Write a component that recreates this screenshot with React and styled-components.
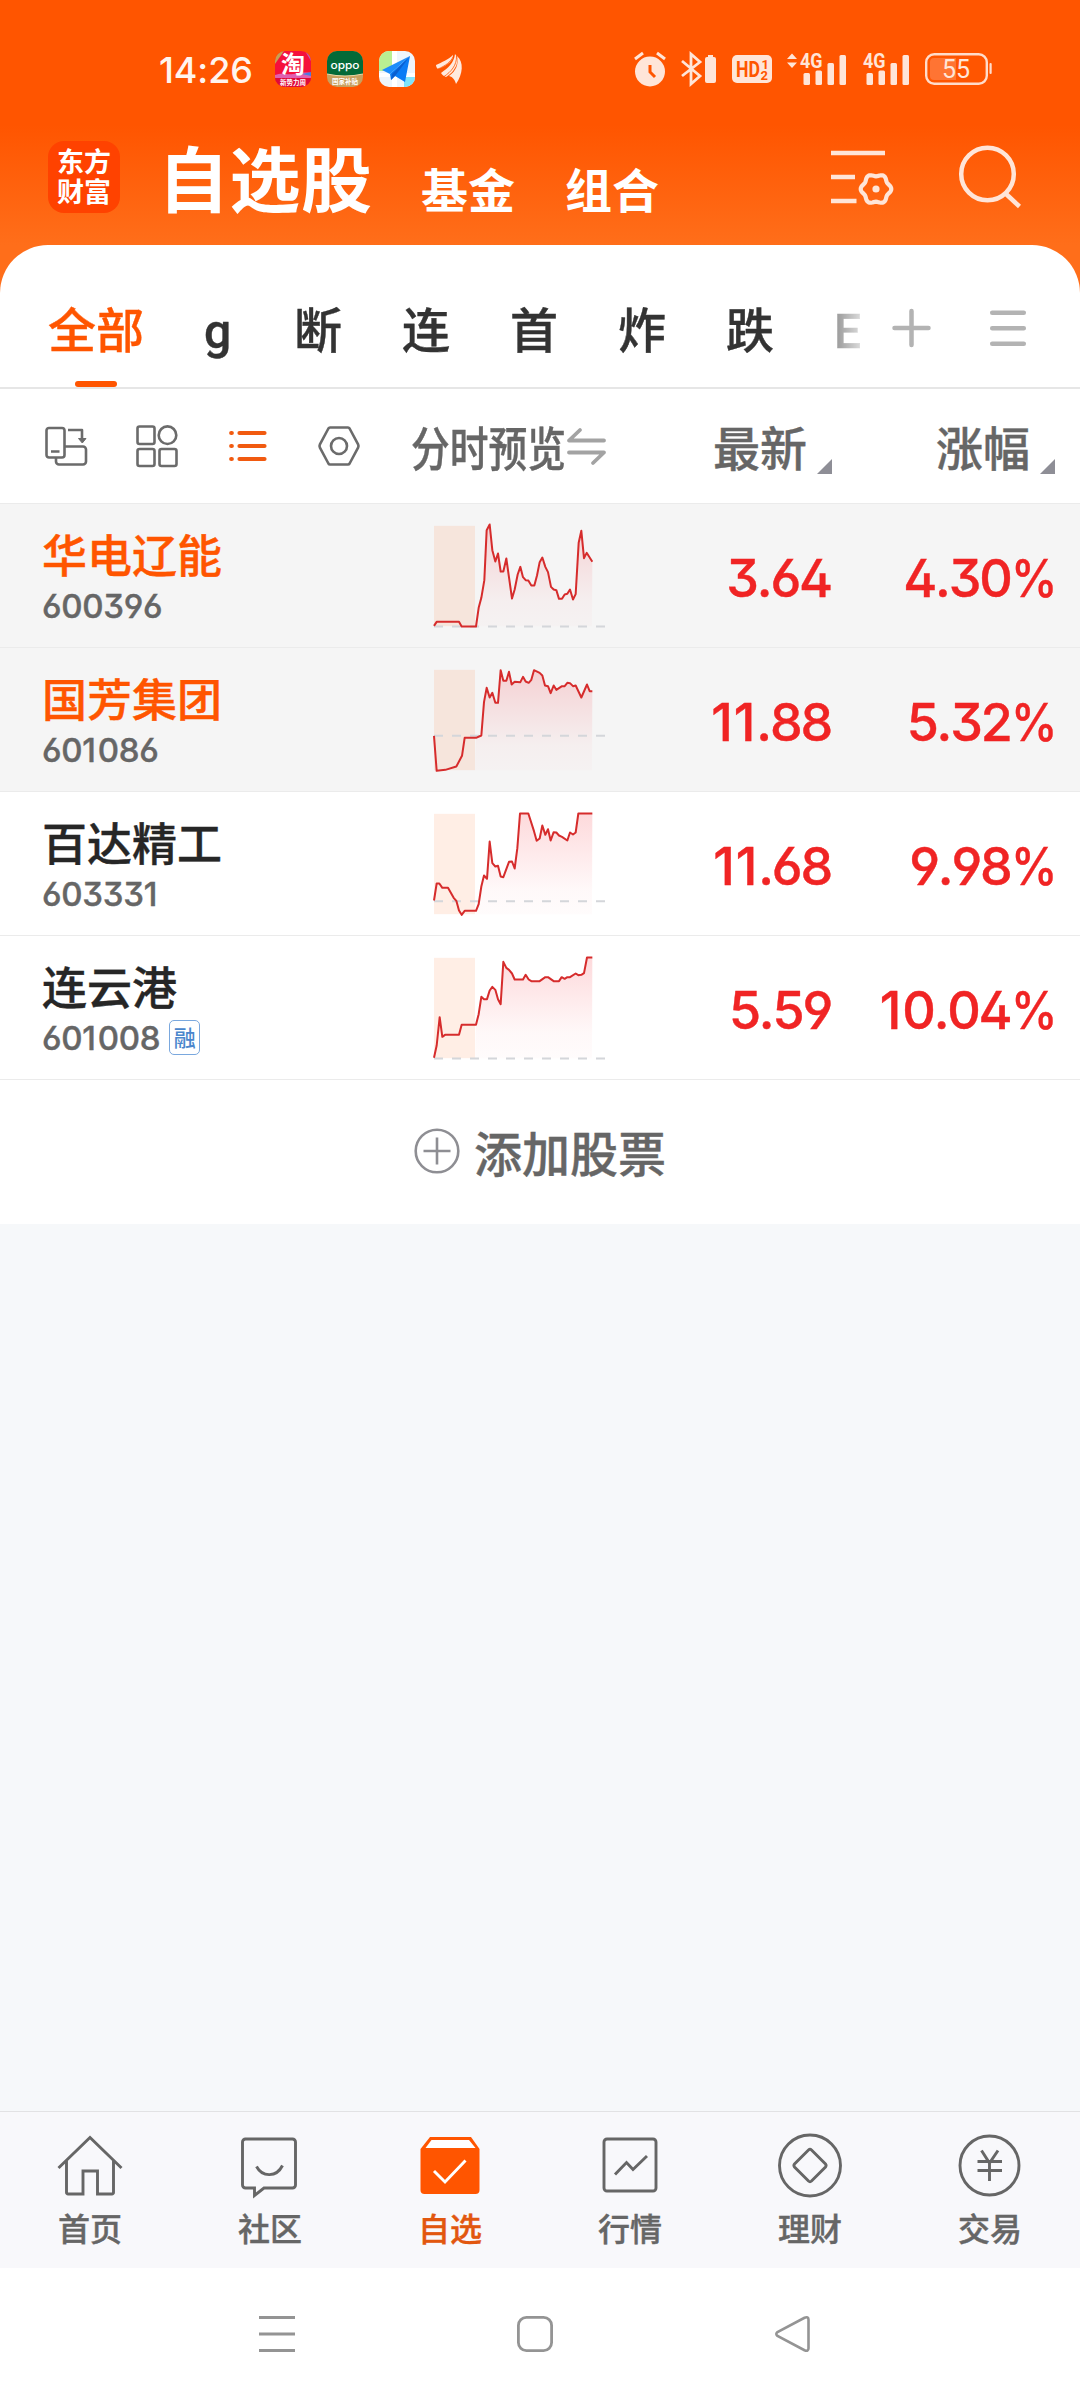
import React from "react";
import styled, { createGlobalStyle } from "styled-components";

const GlobalStyle = createGlobalStyle`
  * {
    box-sizing: border-box;
  }
  body {
    margin: 0;
    font-family: "Noto Sans CJK SC", sans-serif;
    font-weight: 500;
  }
  svg {
    display: block;
    flex: none;
    overflow: visible;
  }
`;

const Page = styled.div`
  width: 1080px;
  height: 2400px;
  display: flex;
  flex-direction: column;
  background: #f6f8fa;
  overflow: hidden;
  -webkit-text-stroke: 0.4px currentColor;
`;

const Hero = styled.div`
  background: linear-gradient(180deg, #ff5500 0px, #ff5500 125px, #ff6e1a 245px);
`;

const StatusBar = styled.div`
  height: 138px;
  padding: 0 88px 0 159px;
  display: flex;
  align-items: center;
  -webkit-text-stroke: 0;
`;

const Time = styled.div`
  width: 116px;
  font-family: Inter, sans-serif;
  font-size: 36px;
  font-weight: 500;
  letter-spacing: -0.1px;
  line-height: 44px;
  color: #fff4ee;
  padding-top: 2px;
`;

const AppIcons = styled.div`
  display: flex;
  align-items: center;
  gap: 16px;
`;

const SystemIcons = styled.div`
  margin-left: auto;
  display: flex;
  align-items: center;
  gap: 15px;
`;

const Header = styled.div`
  height: 107px;
  padding: 0 59px 0 48px;
  display: flex;
  align-items: flex-start;
  -webkit-text-stroke: 0;
`;

const Logo = styled.div`
  width: 72px;
  height: 72px;
  margin-top: 3px;
  padding-top: 5px;
  border-radius: 16px;
  background: #ff4200;
  color: #fff;
  font-size: 27px;
  font-weight: 700;
  line-height: 30px;
  text-align: center;
`;

const Title = styled.h1`
  width: 214px;
  margin: -3px 0 0 38px;
  font-size: 71px;
  font-weight: 700;
  line-height: 80px;
  letter-spacing: 0.5px;
  white-space: nowrap;
  color: #fff;
`;

const HeaderTab = styled.div`
  margin: 22px 0 0 ${({ $gap }) => $gap}px;
  font-size: 47px;
  font-weight: 700;
  line-height: 56px;
  color: #fff;
`;

const HeaderActions = styled.div`
  margin: 7px 0 0 auto;
  display: flex;
  align-items: center;
  gap: 66px;
`;

const TabsBar = styled.div`
  height: 144px;
  padding-left: 48px;
  display: flex;
  align-items: stretch;
  background: #fff;
  border-radius: 48px 48px 0 0;
  border-bottom: 2px solid #e6e6e6;
`;

const Tabs = styled.div`
  width: 812px;
  display: flex;
  gap: 60px;
  overflow: hidden;
  mask-image: linear-gradient(90deg, #000 0, #000 750px, transparent 826px);
`;

const Tab = styled.div`
  position: relative;
  flex: none;
  min-width: 30px;
  padding-top: 48px;
  font-size: 48px;
  line-height: 68px;
  color: ${({ $active }) => ($active ? "#ff5500" : "#333")};
`;

const TabLabel = styled.span`
  font-family: Roboto, "Noto Sans CJK SC", sans-serif;
  line-height: 1;
`;

const TabMark = styled.span`
  position: absolute;
  left: 27px;
  bottom: 0;
  width: 42px;
  height: 6px;
  border-radius: 3px;
  background: #ff5500;
`;

const TabActions = styled.div`
  padding: 63px 0 0 32px;
  display: flex;
  gap: 59px;
`;

const ColumnHead = styled.div`
  height: 114px;
  display: flex;
  align-items: center;
  background: #fff;
`;

const ViewModes = styled.div`
  width: 411px;
  padding-left: 45px;
  display: flex;
  align-items: center;
  gap: 49px;
`;

const HeadLabel = styled.div`
  display: flex;
  align-items: center;
  color: #666;
  font-size: 47px;
  line-height: 64px;
`;

const PreviewHead = styled(HeadLabel)`
  width: 271px;
`;

const Squeezed = styled.div`
  width: 156px;
  white-space: nowrap;
  transform: scaleX(0.825);
  transform-origin: left center;
`;

const SortHead = styled(HeadLabel)`
  width: ${({ $width }) => $width}px;
  justify-content: flex-end;
  gap: 10px;
`;

const SortMark = styled.span`
  width: 15px;
  height: 15px;
  margin-top: 41px;
  background: #8e8e96;
  clip-path: polygon(100% 0, 100% 100%, 0 100%);
`;

const StockRow = styled.div`
  height: 144px;
  display: flex;
  align-items: center;
  border-top: 1px solid #ebebeb;
  background: ${({ $viewed }) => ($viewed ? "#f5f5f5" : "#fff")};
`;

const StockInfo = styled.div`
  width: 430px;
  padding-left: 42px;
`;

const StockName = styled.div`
  font-size: 45px;
  line-height: 56px;
  color: ${({ $viewed }) => ($viewed ? "#ff5500" : "#262626")};
`;

const CodeLine = styled.div`
  height: 40px;
  margin-top: 4px;
  display: flex;
  align-items: center;
  gap: 9px;
`;

const digits = `
  font-family: Inter, sans-serif;
  font-feature-settings: "ss01", "cv09";
  font-kerning: none;
`;

const StockCode = styled.span`
  ${digits}
  font-size: 33px;
  line-height: 40px;
  letter-spacing: -0.3px;
  color: #666;
`;

// the narrow 1 gets some room on its right
const One = styled.span`
  margin-right: 0.06em;
`;

const MarginBadge = styled.span`
  width: 31px;
  height: 35px;
  border: 1.5px solid #7aa8de;
  border-radius: 5px;
  color: #4a86cc;
  font-size: 22px;
  line-height: 31px;
  text-align: center;
  -webkit-text-stroke: 0;
`;

const Figure = styled.div`
  ${digits}
  width: ${({ $width }) => $width}px;
  padding-top: 6px;
  font-size: 52px;
  line-height: 60px;
  letter-spacing: -2.2px;
  text-align: right;
  color: #f02424;
`;

const Percent = styled.span`
  display: inline-block;
  margin-left: -5px;
  transform: scaleX(0.9);
  transform-origin: right center;
`;

const AddRow = styled.div`
  height: 145px;
  padding-bottom: 3px;
  display: flex;
  align-items: center;
  justify-content: center;
  gap: 14px;
  border-top: 1px solid #ebebeb;
  background: #fff;
  color: #666;
  font-size: 48px;
  line-height: 64px;
`;

const Filler = styled.div`
  flex: 1;
`;

const BottomNav = styled.div`
  height: 157px;
  display: grid;
  grid-template-columns: repeat(6, 1fr);
  background: #f8f8fb;
  border-top: 1px solid #e2e2e4;
`;

const NavItem = styled.div`
  padding-top: 20px;
  display: flex;
  flex-direction: column;
  align-items: center;
  font-size: 32px;
  line-height: 40px;
  color: ${({ $active }) => ($active ? "#e2570f" : "#666")};
`;

const NavLabel = styled.span`
  margin-top: 11px;
`;

const SystemNav = styled.div`
  height: 132px;
  padding: 0 270px 0 259px;
  display: flex;
  align-items: center;
  justify-content: space-between;
  background: #fff;
`;

const TaobaoIcon = () => (
  <svg width="36" height="36" viewBox="0 0 36 36">
    <defs>
      <clipPath id="tb"><rect width="36" height="36" rx="10" /></clipPath>
    </defs>
    <g clipPath="url(#tb)">
      <rect width="36" height="36" fill="#f5103c" />
      <path d="M0 0h9L0 13z" fill="#c8a050" />
      <path d="M0 24c8-3 10 0 18-1s12-2 18-1v5H0z" fill="#e060b0" />
      <path d="M27 23l9-2v4z" fill="#4a7de0" />
      <path d="M30 0h6v10z" fill="#c060b0" />
      <rect y="27" width="36" height="9" fill="#e00a38" />
      <text x="18" y="22" fontSize="24" fontWeight="700" fill="#fff" textAnchor="middle">淘</text>
      <text x="18" y="34" fontSize="6.5" fontWeight="700" fill="#fff" textAnchor="middle">新势力周</text>
    </g>
  </svg>
);

const OppoIcon = () => (
  <svg width="36" height="36" viewBox="0 0 36 36">
    <defs>
      <clipPath id="op"><rect width="36" height="36" rx="10" /></clipPath>
    </defs>
    <g clipPath="url(#op)">
      <rect width="36" height="36" fill="#c9a05e" />
      <path d="M0 0h36v23q-18 4-36 0z" fill="#046a38" />
      <path d="M0 23q18 4 36 0" stroke="#ecd9a8" fill="none" />
      <text x="18" y="18" fontSize="11" fontFamily="Inter, sans-serif" textLength="29" lengthAdjust="spacingAndGlyphs" fill="#fff" textAnchor="middle">oppo</text>
      <text x="18" y="32.5" fontSize="6.5" fontWeight="700" fill="#fff" textAnchor="middle">国家补贴</text>
    </g>
  </svg>
);

const MapIcon = () => (
  <svg width="36" height="36" viewBox="0 0 36 36">
    <defs>
      <clipPath id="mp"><rect width="36" height="36" rx="10" /></clipPath>
    </defs>
    <g clipPath="url(#mp)">
      <rect width="36" height="36" fill="#eef5fb" />
      <path d="M0 0h13v20H0z" fill="#b9ef92" />
      <path d="M13 0h5v36h-5zM0 22h36v4H0z" fill="#fff" />
      <path d="M25 26h11v10H25z" fill="#7fe3fb" />
      <path d="M31 5L3 19l8 4z" fill="#1c8dfb" />
      <path d="M31 5L11 23l1 6 4-4 10 6z" fill="#0a7cf5" />
      <path d="M31 5L13 23l-1 6 4-4z" fill="#0a5fd0" />
    </g>
  </svg>
);

const WingSvg = styled.svg`
  margin-left: 5px;
`;

const WingIcon = () => (
  <WingSvg width="26" height="30" viewBox="0 0 26 30" fill="#ffe9de">
    <path d="M0 11C6 8 12 6 17 1c1 5-6 11-15 14C1 14 0 13 0 11z" />
    <path d="M5 19C12 14 18 9 19 0c6 6 0 18-9 23-2-1-4-2-5-4z" />
    <path d="M13 22c7-5 10-12 8-20 7 6 6 18-1 28-1-4-3-7-7-8z" />
    <path d="M17.500 2C15 8 9 12 2 15M20.500 2C21 11 15 18 8 22.500" stroke="#ff5500" strokeWidth="0.800" fill="none" />
  </WingSvg>
);

const AlarmIcon = () => (
  <svg width="32" height="36" viewBox="0 0 32 36">
    <circle cx="16" cy="20.5" r="15" fill="#ffe5d8" />
    <path d="M1 8l8-6M31 8l-8-6" stroke="#ffe5d8" strokeWidth="3" />
    <path d="M16 14v7l5 5" stroke="#ff5500" strokeWidth="3" fill="none" />
  </svg>
);

const BluetoothIcon = () => (
  <svg width="36" height="34" viewBox="0 0 36 34">
    <path d="M1 9l18 15-9 8V2l9 8L1 24" stroke="#ffe5d8" strokeWidth="2.8" fill="none" />
    <rect x="24" y="5" width="11" height="26" rx="2" fill="#ffe5d8" />
    <rect x="27" y="3" width="5" height="3" fill="#ffe5d8" />
  </svg>
);

const HdIcon = () => (
  <svg width="40" height="28" viewBox="0 0 40 28" fontFamily="Roboto, sans-serif" fontWeight="700" fill="#ff5500">
    <rect width="40" height="28" rx="5" fill="#ffe5d8" />
    <text x="4" y="22" fontSize="22" textLength="24" lengthAdjust="spacingAndGlyphs">HD</text>
    <text x="29.5" y="13.5" fontSize="13">1</text>
    <text x="28.5" y="25" fontSize="13">2</text>
  </svg>
);

const SignalIcon = ({ arrows }) => {
  const x = arrows ? 13 : 1;
  return (
    <svg width={arrows ? 60 : 48} height="32" viewBox={`0 0 ${arrows ? 60 : 48} 32`} fill="#ffe5d8">
      {arrows && <path d="M0 6l5-5.500 5 5.500zM0 9.500h10l-5 5.500z" />}
      <text x={x} y="15" fontSize="21" fontFamily="Roboto, sans-serif" fontWeight="700" textLength="22.500" lengthAdjust="spacingAndGlyphs">4G</text>
      <rect x={x + 3.5} y="20" width="6.500" height="12" rx="1.500" />
      <rect x={x + 15.5} y="17.500" width="6.500" height="14.500" rx="1.500" />
      <rect x={x + 27.500} y="10" width="6.500" height="22" rx="1.500" />
      <rect x={x + 39.500} y="2" width="6.500" height="30" rx="1.500" />
    </svg>
  );
};

const BatteryIcon = () => (
  <svg width="67" height="32" viewBox="0 0 67 32">
    <path d="M9 5h22v22H9a4 4 0 0 1-4-4V9a4 4 0 0 1 4-4z" fill="#ff7433" />
    <rect x="1.200" y="1.200" width="60.600" height="29.600" rx="8" fill="none" stroke="#ffdccb" strokeWidth="2.400" />
    <rect x="64.500" y="10" width="2.200" height="11" rx="1" fill="#ffdccb" />
    <text x="31" y="25" fontSize="25" fontFamily="Roboto, sans-serif" fontWeight="400" fill="#ffe5d8" textAnchor="middle">55</text>
  </svg>
);

const gear = () => {
  let d = "";
  for (let i = 0; i <= 72; i++) {
    const a = (i / 72) * Math.PI * 2;
    const r = 14 + 1.300 * Math.cos(6 * a);
    d += `${i ? "L" : "M"}${(45 + r * Math.cos(a)).toFixed(2)} ${(39 + r * Math.sin(a)).toFixed(2)}`;
  }
  return d + "z";
};

const ListSettingsIcon = () => (
  <svg width="62" height="54" viewBox="0 0 62 54" stroke="#ffe5d8" strokeWidth="4.500" fill="none">
    <path d="M0 3h54M0 27h24M0 51h25.500" />
    <path d={gear()} strokeWidth="4.200" strokeLinejoin="round" />
    <circle cx="45" cy="39" r="3.600" fill="#ffe5d8" stroke="none" />
  </svg>
);

const SearchIcon = () => (
  <svg width="62" height="64" viewBox="0 0 62 64" stroke="#ffe5d8" strokeWidth="4.500" fill="none">
    <circle cx="28.500" cy="29" r="26.300" />
    <path d="M46 48l14.500 13.500" />
  </svg>
);

const PlusIcon = () => (
  <svg width="39" height="39" viewBox="0 0 39 39" stroke="#b3b3b3" strokeWidth="4.500" strokeLinecap="round">
    <path d="M19.500 3v34M2.500 20h34" />
  </svg>
);

const MenuIcon = () => (
  <svg width="36" height="39" viewBox="0 0 36 39" stroke="#b3b3b3" strokeWidth="4.500" strokeLinecap="round">
    <path d="M2.200 4.700h31.600M2.200 20.300h31.600M2.200 35.700h31.600" />
  </svg>
);

const RotateIcon = () => (
  <svg width="42" height="42" viewBox="0 0 42 42" stroke="#6b6b6b" strokeWidth="2.600" fill="none" strokeLinejoin="round">
    <rect x="1.500" y="3" width="18" height="29.500" rx="2.500" />
    <path d="M6 26.500h8.500M19.500 21.500h18.500a3 3 0 0 1 3 3v12a3 3 0 0 1-3 3h-24a3 3 0 0 1-3-3v-4M23 5h14v10" />
    <path d="M33.500 13.500h7.500l-3.700 4.500z" fill="#6b6b6b" strokeWidth="1" />
  </svg>
);

const GridIcon = () => (
  <svg width="42" height="42" viewBox="0 0 42 42" stroke="#6b6b6b" strokeWidth="2.600" fill="none">
    <rect x="1.500" y="1.500" width="17" height="17.500" rx="2" />
    <circle cx="31.500" cy="10.200" r="8.800" />
    <rect x="1.500" y="24" width="17" height="17" rx="2" />
    <rect x="23.500" y="24" width="17" height="17" rx="2" />
  </svg>
);

const ListIcon = () => (
  <svg width="42" height="42" viewBox="0 0 42 42" stroke="#f15a10" strokeWidth="4.200" strokeLinecap="round">
    <path d="M12.500 8h25M12.500 21h25M12.500 34h25M4.200 8h.6M4.200 21h.6M4.200 34h.6" />
  </svg>
);

const HexIcon = () => (
  <svg width="42" height="42" viewBox="0 0 42 42" stroke="#6b6b6b" strokeWidth="2.600" fill="none" strokeLinejoin="round">
    <path d="M12 2.500h18q1 0 1.600 1l8.500 15.800q.8 1.700 0 3.400L31.600 38.500q-.6 1-1.600 1H12q-1 0-1.600-1L1.900 22.700q-.8-1.700 0-3.400L10.400 3.500q.6-1 1.600-1z" />
    <circle cx="21" cy="21" r="8" />
  </svg>
);

const SwapIcon = () => (
  <svg width="40" height="38" viewBox="0 0 40 38" stroke="#a3a3a3" strokeWidth="3.800" fill="none" strokeLinecap="round" strokeLinejoin="round">
    <path d="M37 13.500H2L13 3M2 25.500h35L26 36" />
  </svg>
);

const CirclePlusIcon = () => (
  <svg width="46" height="46" viewBox="0 0 46 46" stroke="#8e8e93" strokeWidth="2.600" fill="none">
    <circle cx="23" cy="23" r="21.300" />
    <path d="M23 9.500v27M9.500 23h27" />
  </svg>
);

// 64x64 drawings of the bottom tab bar
const navIcons = {
  home: (
    <>
      <path d="M.5 36L32 5.500 63.500 36" />
      <path d="M8.500 29v31.500a1.500 1.500 0 0 0 1.500 1.500H25V39h14.500v23H54a1.500 1.500 0 0 0 1.500-1.500V29" />
    </>
  ),
  chat: (
    <>
      <path d="M6.500 7h48a3 3 0 0 1 3 3v43a3 3 0 0 1-3 3H26l-9.500 7.500V56h-9a3 3 0 0 1-3-3V10a3 3 0 0 1 3-3z" />
      <path d="M18.500 34.500c6 11 20 11 26-1" />
    </>
  ),
  picks: (
    <>
      <path d="M2.500 17L12 5h41l8.500 12v41a4 4 0 0 1-4 4h-51a4 4 0 0 1-4-4z" fill="#ff5500" stroke="none" />
      <path d="M7.500 16l6-8h37.500l6.500 8z" fill="#fff" stroke="none" />
      <path d="M16 39l11 11 20.500-21.500" stroke="#fff" />
    </>
  ),
  market: (
    <>
      <rect x="6" y="7" width="52" height="52" rx="3" />
      <path d="M17 42.500L28.500 30.500 35 37.500 49 24" />
    </>
  ),
  finance: (
    <>
      <circle cx="32" cy="33.500" r="30.500" />
      <path d="M33.500 18l14 14q1.200 1.500 0 3l-14 14q-1.500 1.400-3 0l-14-14q-1.200-1.500 0-3l14-14q1.500-1.400 3 0z" />
    </>
  ),
  trade: (
    <>
      <circle cx="31.500" cy="33.500" r="29.500" />
      <path d="M23.500 18.500L31.500 31l8.500-12.500M19.500 29.500h24.500M19.500 38.500h24.500M31.500 30v19" />
    </>
  ),
};

const NavIcon = ({ name }) => (
  <svg width="64" height="64" viewBox="0 0 64 64" stroke="#666" strokeWidth="2.900" fill="none">
    {navIcons[name]}
  </svg>
);

// 3 units per pixel, the row is 432 units high
const Sparkline = ({ id, top, base, line }) => (
  <svg width="180" height="144" viewBox="30 1.500 540 432">
    <defs>
      <linearGradient id={id} x1="0" y1="0" x2="0" y2="1">
        <stop offset="0" stopColor="#f5222d" stopOpacity="0.17" />
        <stop offset="0.75" stopColor="#f5222d" stopOpacity="0.03" />
        <stop offset="1" stopColor="#f5222d" stopOpacity="0.015" />
      </linearGradient>
    </defs>
    <rect x="42" y={top} width="123" height="301" fill="#ff5500" fillOpacity="0.1" />
    <polygon points={`165,${top + 301} ${line.slice(line.indexOf("168,"))} 516,${top + 301}`} fill={`url(#${id})`} />
    <path d={`M42 ${base}H556`} stroke="#d4d6da" strokeWidth="6" strokeDasharray="27 27" />
    <polyline points={line} fill="none" stroke="#d62c2c" strokeWidth="6" strokeLinejoin="round" />
  </svg>
);

const Digits = ({ value }) =>
  value.split("").map((c, i) => (c === "1" ? <One key={i}>1</One> : c));

const stocks = [
  {
    name: "华电辽能", code: "600396", price: "3.64", change: "4.30", viewed: true, top: 67, base: 369,
    line: "42,367 50,355 117,355 125,369 168,369 176,313 184,283 193,230 200,80 209,63 217,140 226,174 234,150 242,204 250,204 259,165 276,285 284,258 293,213 301,190 309,221 317,230 325,231 334,246 343,246 351,216 359,176 367,162 376,190 384,206 393,250 401,258 409,260 417,286 426,286 434,273 442,271 450,258 459,288 467,272 476,118 484,82 492,164 500,148 517,175",
  },
  {
    name: "国芳集团", code: "601086", price: "11.88", change: "5.32", viewed: true, top: 67, base: 265,
    line: "42,265 50,370 76,367 109,357 126,325 134,271 168,271 184,264 192,164 200,121 209,150 217,136 226,166 234,166 242,68 250,100 259,100 267,73 275,111 284,103 301,104 309,88 317,102 326,106 334,97 342,68 359,76 367,84 375,114 384,116 392,137 401,114 409,127 426,116 434,116 442,106 450,107 459,116 467,114 484,150 501,111 509,131 517,131",
  },
  {
    name: "百达精工", code: "603331", price: "11.68", change: "9.98", top: 67, base: 329,
    line: "42,327 50,276 58,276 67,289 84,289 101,319 109,328 117,357 125,370 134,358 168,358 176,338 184,285 192,252 201,262 209,150 217,215 226,225 234,223 242,255 250,257 267,211 276,210 284,231 292,170 300,66 325,66 342,119 350,148 359,141 367,102 376,130 384,113 392,147 401,122 409,123 417,132 426,136 442,147 450,123 459,129 467,123 475,66 517,66",
  },
  {
    name: "连云港", code: "601008", price: "5.59", change: "10.04", margin: true, top: 67, base: 369,
    line: "42,367 50,330 59,245 67,304 75,298 117,298 125,268 168,268 176,236 184,184 192,191 201,191 209,165 217,154 226,163 234,191 242,206 250,79 259,97 267,103 276,114 284,132 309,132 317,118 326,132 334,137 359,137 376,125 384,125 401,137 417,137 425,125 434,130 442,125 450,125 467,114 475,119 484,118 492,113 501,66 517,66",
  },
];

const tabs = ["全部", "g", "断", "连", "首", "炸", "跌", "E"];

const navItems = [
  { label: "首页", icon: "home" },
  { label: "社区", icon: "chat" },
  { label: "自选", icon: "picks", active: true },
  { label: "行情", icon: "market" },
  { label: "理财", icon: "finance" },
  { label: "交易", icon: "trade" },
];

const App = () => {
  return (
    <Page>
      <GlobalStyle />
      <Hero>
        <StatusBar>
          <Time>14:26</Time>
          <AppIcons>
            <TaobaoIcon />
            <OppoIcon />
            <MapIcon />
            <WingIcon />
          </AppIcons>
          <SystemIcons>
            <AlarmIcon />
            <BluetoothIcon />
            <HdIcon />
            <SignalIcon arrows />
            <SignalIcon />
            <BatteryIcon />
          </SystemIcons>
        </StatusBar>
        <Header>
          <Logo>
            东方
            <br />
            财富
          </Logo>
          <Title>自选股</Title>
          <HeaderTab $gap={49}>基金</HeaderTab>
          <HeaderTab $gap={50}>组合</HeaderTab>
          <HeaderActions>
            <ListSettingsIcon />
            <SearchIcon />
          </HeaderActions>
        </Header>
        <TabsBar>
          <Tabs>
            {tabs.map((tab, i) => (
              <Tab key={tab} $active={i === 0}>
                <TabLabel>{tab}</TabLabel>
                {i === 0 && <TabMark />}
              </Tab>
            ))}
          </Tabs>
          <TabActions>
            <PlusIcon />
            <MenuIcon />
          </TabActions>
        </TabsBar>
      </Hero>
      <ColumnHead>
        <ViewModes>
          <RotateIcon />
          <GridIcon />
          <ListIcon />
          <HexIcon />
        </ViewModes>
        <PreviewHead>
          <Squeezed>分时预览</Squeezed>
          <SwapIcon />
        </PreviewHead>
        <SortHead $width={150}>
          最新
          <SortMark />
        </SortHead>
        <SortHead $width={223}>
          涨幅
          <SortMark />
        </SortHead>
      </ColumnHead>
      {stocks.map((stock) => (
        <StockRow key={stock.code} $viewed={stock.viewed}>
          <StockInfo>
            <StockName $viewed={stock.viewed}>{stock.name}</StockName>
            <CodeLine>
              <StockCode>
                <Digits value={stock.code} />
              </StockCode>
              {stock.margin && <MarginBadge>融</MarginBadge>}
            </CodeLine>
          </StockInfo>
          <Sparkline id={`fill-${stock.code}`} top={stock.top} base={stock.base} line={stock.line} />
          <Figure $width={221}>
            <Digits value={stock.price} />
          </Figure>
          <Figure $width={224}>
            <Digits value={stock.change} />
            <Percent>%</Percent>
          </Figure>
        </StockRow>
      ))}
      <AddRow>
        <CirclePlusIcon />
        添加股票
      </AddRow>
      <Filler />
      <BottomNav>
        {navItems.map((item) => (
          <NavItem key={item.label} $active={item.active}>
            <NavIcon name={item.icon} />
            <NavLabel>{item.label}</NavLabel>
          </NavItem>
        ))}
      </BottomNav>
      <SystemNav>
        <svg width="36" height="36" viewBox="0 0 36 36" stroke="#949494" strokeWidth="3">
          <path d="M0 1.500h36M0 18h36M0 34.500h36" />
        </svg>
        <svg width="36" height="36" viewBox="0 0 36 36" stroke="#949494" strokeWidth="2.800" fill="none">
          <rect x="1.400" y="1.400" width="33.200" height="33.200" rx="8" />
        </svg>
        <svg width="35" height="36" viewBox="0 0 35 36" stroke="#949494" strokeWidth="2.600" fill="none">
          <path d="M29.500 1.800q4-1.600 4 2v28.400q0 3.600-4 2L2.500 20q-2.400-2 0-4z" />
        </svg>
      </SystemNav>
    </Page>
  );
};

export default App;
